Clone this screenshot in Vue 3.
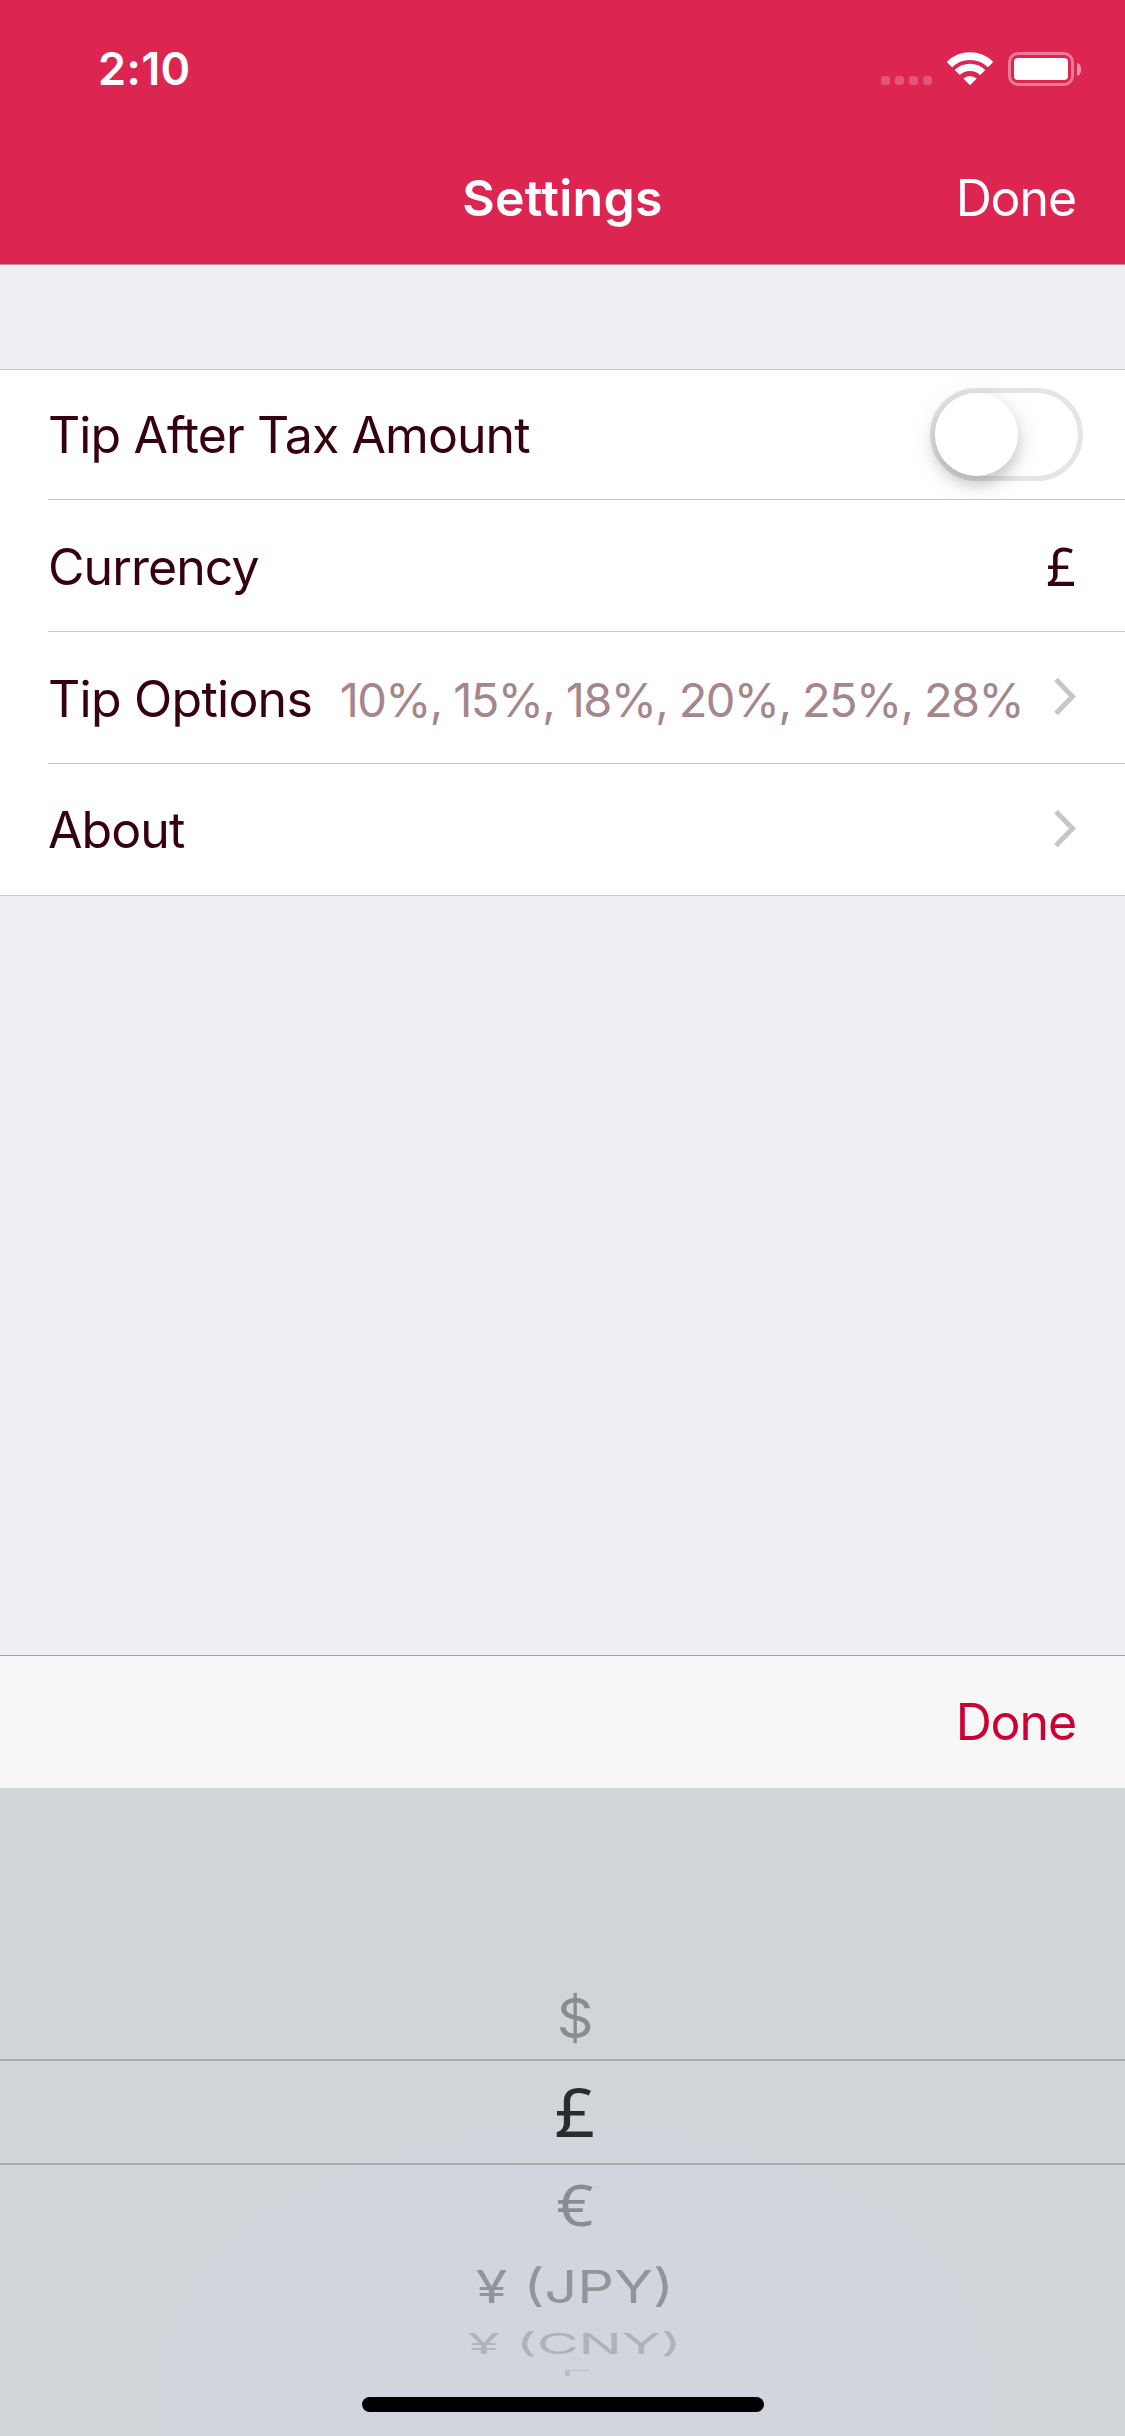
<script setup>
import { ref } from 'vue'

const tipAfterTax = ref(false)
const tipOptions = ref([10, 15, 18, 20, 25, 28])

// Wheel rows: height of the row and how much the text is squeezed
const currencies = ref([
  { label: '$', height: 82, sx: 0.87, sy: 0.83, color: '#8a8d90' },
  { label: '£', height: 106, sx: 1.08, sy: 1.03, color: '#2a2b2d', sign: true, selected: true },
  { label: '€', height: 82, sx: 0.98, sy: 0.85, color: '#8a8c91', sign: true },
  { label: '¥ (JPY)', height: 79, sx: 0.87, sy: 0.68, color: '#929499' },
  { label: '¥ (CNY)', height: 36, sx: 0.87, sy: 0.42, color: '#b0b2b8' }
])

const rowStyle = (item) => ({ height: item.height + 'px', color: item.color })
const textStyle = (item) => ({ transform: `scale(${item.sx}, ${item.sy})` })
</script>

<template>
  <div class="screen">
    <header class="header">
      <div class="status-bar">
        <span class="time">2:10</span>
        <div class="status-icons">
          <div class="signal"><i></i><i></i><i></i><i></i></div>
          <svg class="wifi" width="46" height="34" viewBox="0 0 46 34">
            <path d="M2.35 12.65A29.2 29.2 0 0 1 43.65 12.65" fill="none" stroke="#fff" stroke-width="7.6" />
            <path d="M10.27 20.57A18 18 0 0 1 35.73 20.57" fill="none" stroke="#fff" stroke-width="7.2" />
            <path d="M23 33.3L16.3 26.6A9.6 9.6 0 0 1 29.7 26.6Z" fill="#fff" />
          </svg>
          <div class="battery">
            <div class="battery-body"><div class="battery-level"></div></div>
            <div class="battery-tip"></div>
          </div>
        </div>
      </div>
      <nav class="nav-bar">
        <span></span>
        <h1 class="title">Settings</h1>
        <button class="done">Done</button>
      </nav>
    </header>

    <main class="content">
      <ul class="list">
        <li class="row first">
          <span class="label">Tip After Tax Amount</span>
          <div class="switch" :class="{ on: tipAfterTax }" @click="tipAfterTax = !tipAfterTax">
            <div class="knob"></div>
          </div>
        </li>
        <li class="row">
          <span class="label low">Currency</span>
          <span class="symbol sign">£</span>
        </li>
        <li class="row">
          <span class="label low options">Tip Options</span>
          <span class="value">{{ tipOptions.map((n) => n + '%').join(', ') }}</span>
          <svg class="chevron" width="22" height="40" viewBox="0 0 22 40">
            <path d="M2 2.5L18.5 19.5L2 36.5" fill="none" stroke="#c7c6cc" stroke-width="5" />
          </svg>
        </li>
        <li class="row">
          <span class="label">About</span>
          <svg class="chevron" width="22" height="40" viewBox="0 0 22 40">
            <path d="M2 2.5L18.5 19.5L2 36.5" fill="none" stroke="#c7c6cc" stroke-width="5" />
          </svg>
        </li>
      </ul>
    </main>

    <div class="toolbar">
      <button class="done red">Done</button>
    </div>

    <div class="picker">
      <div
        v-for="item in currencies"
        :key="item.label"
        class="picker-row"
        :class="{ selected: item.selected }"
        :style="rowStyle(item)"
      >
        <span class="picker-text" :class="{ sign: item.sign }" :style="textStyle(item)">{{ item.label }}</span>
      </div>
      <!-- Next row, almost out of the wheel -->
      <svg class="picker-last" width="24" height="7" viewBox="0 0 24 7">
        <path d="M0 0H24V1H5V6H0Z" fill="#bcbec5" />
      </svg>
      <div class="home-indicator"></div>
    </div>
  </div>
</template>

<style>
body {
  margin: 0;
  background: #efeef4;
}
</style>

<style scoped>
.screen {
  display: flex;
  flex-direction: column;
  width: 1125px;
  height: 2436px;
  overflow: hidden;
  background: #efeef4;
  font-family: Inter, 'Liberation Sans', sans-serif;
  color: #36000f;
}

.header {
  box-sizing: border-box;
  height: 265px;
  background: #dc2550;
  border-bottom: 1px solid #bd8a9c;
  color: #fff;
}

.status-bar {
  display: flex;
  justify-content: space-between;
  height: 132px;
  padding: 0 44px 0 98px;
}

.time {
  font-size: 45px;
  font-weight: 600;
  letter-spacing: 0.4px;
  line-height: 138px;
}

.status-icons {
  display: flex;
  align-items: flex-start;
  padding-top: 52px;
}

.signal {
  display: flex;
  gap: 5px;
  margin: 24px 15px 0 0;
}

.signal i {
  width: 9px;
  height: 9px;
  border-radius: 3px;
  background: rgba(255, 255, 255, 0.22);
}

.wifi {
  margin-right: 15px;
}

.battery {
  display: flex;
  align-items: center;
  gap: 3px;
}

.battery-body {
  box-sizing: border-box;
  width: 66px;
  height: 34px;
  padding: 3px;
  border: 3px solid rgba(255, 255, 255, 0.4);
  border-radius: 10px;
}

.battery-level {
  height: 22px;
  border-radius: 4px;
  background: #fff;
}

.battery-tip {
  width: 4px;
  height: 13px;
  border-radius: 0 4px 4px 0 / 0 6px 6px 0;
  background: rgba(255, 255, 255, 0.5);
}

.nav-bar {
  display: grid;
  grid-template-columns: 1fr auto 1fr;
  align-items: center;
  height: 132px;
  padding: 0 49px;
}

.title {
  margin: 0;
  font-size: 50px;
  font-weight: 600;
  letter-spacing: 0.3px;
  line-height: 132px;
}

.done {
  justify-self: end;
  padding: 0;
  border: none;
  background: none;
  color: inherit;
  font-family: inherit;
  font-size: 50px;
  letter-spacing: -1.1px;
  line-height: 130px;
}

.done.red {
  color: #cc0033;
}

.content {
  height: 1390px;
}

.list {
  margin: 104px 0 0;
  padding: 0 0 0 48px;
  list-style: none;
  background: #fff;
  border-top: 1px solid #c8c7cc;
  border-bottom: 1px solid #c8c7cc;
}

.row {
  display: flex;
  align-items: center;
  height: 131px;
  padding-right: 49px;
}

.row + .row {
  border-top: 1px solid #c8c7cc;
}

.row.first {
  height: 129px;
  padding-right: 42px;
}

.label {
  flex: 1;
  padding-top: 1px;
  font-size: 50px;
  letter-spacing: -0.92px;
  white-space: nowrap;
}

.label.low {
  padding-top: 3px;
}

.label.options {
  letter-spacing: -0.75px;
}

.sign {
  font-family: 'Noto Sans', 'Liberation Sans', sans-serif;
}

.symbol {
  font-size: 52px;
}

.value {
  padding-top: 3px;
  color: #a5868c;
  font-size: 47px;
  letter-spacing: -1.62px;
  white-space: nowrap;
}

.chevron {
  flex-shrink: 0;
  margin: -2px 0 0 31px;
}

.switch {
  box-sizing: border-box;
  width: 153px;
  height: 93px;
  border: 5px solid #e5e5e5;
  border-radius: 47px;
}

.switch.on {
  display: flex;
  justify-content: flex-end;
  border-color: #4cd964;
  background: #4cd964;
}

.knob {
  width: 83px;
  height: 83px;
  border-radius: 50%;
  background: #fff;
  box-shadow:
    0 9px 14px rgba(0, 0, 0, 0.15),
    0 6px 28px rgba(0, 0, 0, 0.12);
}

.toolbar {
  box-sizing: border-box;
  display: flex;
  justify-content: flex-end;
  height: 133px;
  padding-right: 49px;
  background: #f7f7f8;
  border-top: 1px solid #a2a1a8;
}

.picker {
  display: flex;
  flex-direction: column;
  align-items: center;
  flex: 1;
  padding-top: 189px;
  background: radial-gradient(ellipse 430px 270px at 575px 600px, #d2d5de 75%, #d1d5da 100%);
}

.picker-row {
  box-sizing: border-box;
  display: flex;
  flex-shrink: 0;
  align-items: center;
  justify-content: center;
  width: 100%;
  padding-left: 25px;
}

.picker-row.selected {
  border-top: 2px solid #a7aaae;
  border-bottom: 2px solid #a7aaae;
}

.picker-text {
  font-size: 66px;
  line-height: 66px;
  white-space: nowrap;
}

.picker-text.sign {
  padding-bottom: 4px;
}

.picker-last {
  margin: 8px 0 0 28px;
}

.home-indicator {
  width: 402px;
  height: 15px;
  margin-top: 20px;
  border-radius: 8px;
  background: #000;
}
</style>
